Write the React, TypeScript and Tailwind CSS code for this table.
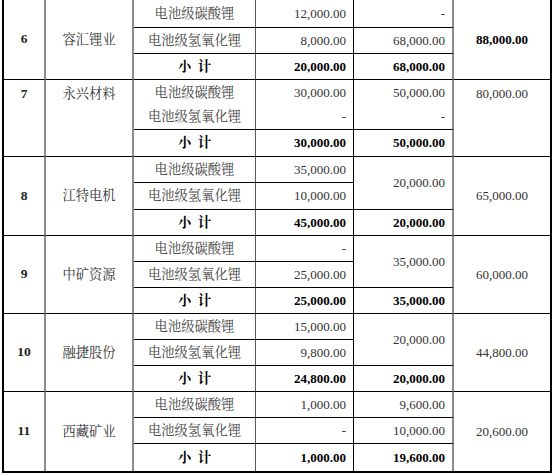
import React from 'react';

type GroupProps = {
  no: string;
  name: string;
  a: [string, string, string];
  c5: [string, string, string];
  total: string;
  heights: [number, number, number];
  mergeC5?: boolean;
  noMidLine?: boolean;
  top?: boolean;
  boldTotal?: boolean;
  last?: boolean;
};

const num = "font-['Liberation_Serif',serif] text-[13px] text-right pr-[7px]";
const cjk = "font-['Liberation_Serif','Noto_Serif_CJK_SC','Noto_Sans_CJK_SC',serif] text-[13.3px] text-center";

const Group: React.FC<GroupProps> = ({ no, name, a, c5, total, heights, mergeC5, noMidLine, top, boldTotal, last }) => {
  const gb = last ? '' : 'border-b border-black';
  const mid = noMidLine ? '' : 'border-b border-black';
  const va = top ? 'align-top pt-[4px]' : 'align-middle';
  return (
    <>
      <tr style={{ height: heights[0] }}>
        <td rowSpan={3} className={`${va} ${gb} border-r-2 border-r-[#8c8c8c] text-center font-['Liberation_Serif',serif] text-[13.5px] font-bold text-[#222]`}>
          {no}
        </td>
        <td rowSpan={3} className={`${va} ${gb} border-r-2 border-r-[#8c8c8c] ${cjk} text-[#333]`}>
          {name}
        </td>
        <td className={`${mid} border-r-[1.5px] border-r-[#5a5a5a] ${cjk} text-[#444]`}>电池级碳酸锂</td>
        <td className={`${mid} border-r border-r-black ${num} text-[#333]`}>{a[0]}</td>
        <td rowSpan={mergeC5 ? 2 : 1} className={`${mergeC5 ? 'border-b border-black' : mid} border-r-2 border-r-[#8c8c8c] ${num} text-[#333]`}>
          {c5[0]}
        </td>
        <td rowSpan={3} className={`${va} ${gb} border-r-2 border-r-black font-['Liberation_Serif',serif] text-[13px] text-center ${boldTotal ? 'font-bold text-black' : 'text-[#333]'}`}>
          {total}
        </td>
      </tr>
      <tr style={{ height: heights[1] }}>
        <td className={`border-b border-black border-r-[1.5px] border-r-[#5a5a5a] ${cjk} text-[#444]`}>电池级氢氧化锂</td>
        <td className={`border-b border-black border-r border-r-black ${num} text-[#333]`}>{a[1]}</td>
        {!mergeC5 && (
          <td className={`border-b border-black border-r-2 border-r-[#8c8c8c] ${num} text-[#333]`}>{c5[1]}</td>
        )}
      </tr>
      <tr style={{ height: heights[2] }}>
        <td className={`${gb} border-r-[1.5px] border-r-[#5a5a5a] ${cjk} font-bold text-black`}>小{'\u2002'}计</td>
        <td className={`${gb} border-r border-r-black ${num} font-bold text-black`}>{a[2]}</td>
        <td className={`${gb} border-r-2 border-r-[#8c8c8c] ${num} font-bold text-black`}>{c5[2]}</td>
      </tr>
    </>
  );
};

export default function App() {
  return (
    <div className="w-[554px] h-[476px] bg-white">
      <div className="ml-[2px] w-[550px] border-l-2 border-b-2 border-black">
        <table className="table-fixed border-separate border-spacing-0 w-[548px]">
          <colgroup>
            <col className="w-[42px]" />
            <col className="w-[88px]" />
            <col className="w-[122px]" />
            <col className="w-[98px]" />
            <col className="w-[100px]" />
            <col className="w-[98px]" />
          </colgroup>
          <tbody>
            <Group no="6" name="容汇锂业" a={['12,000.00', '8,000.00', '20,000.00']} c5={['-', '68,000.00', '68,000.00']} total="88,000.00" boldTotal heights={[28, 26, 26]} />
            <Group no="7" name="永兴材料" a={['30,000.00', '-', '30,000.00']} c5={['50,000.00', '-', '50,000.00']} total="80,000.00" noMidLine top heights={[25, 25, 27]} />
            <Group no="8" name="江特电机" a={['35,000.00', '10,000.00', '45,000.00']} c5={['20,000.00', '', '20,000.00']} mergeC5 total="65,000.00" heights={[26, 27, 26]} />
            <Group no="9" name="中矿资源" a={['-', '25,000.00', '25,000.00']} c5={['35,000.00', '', '35,000.00']} mergeC5 total="60,000.00" heights={[26, 26, 26]} />
            <Group no="10" name="融捷股份" a={['15,000.00', '9,800.00', '24,800.00']} c5={['20,000.00', '', '20,000.00']} mergeC5 total="44,800.00" heights={[26, 26, 26]} />
            <Group no="11" name="西藏矿业" a={['1,000.00', '-', '1,000.00']} c5={['9,600.00', '10,000.00', '19,600.00']} total="20,600.00" heights={[26, 26, 27]} last />
          </tbody>
        </table>
      </div>
    </div>
  );
}
